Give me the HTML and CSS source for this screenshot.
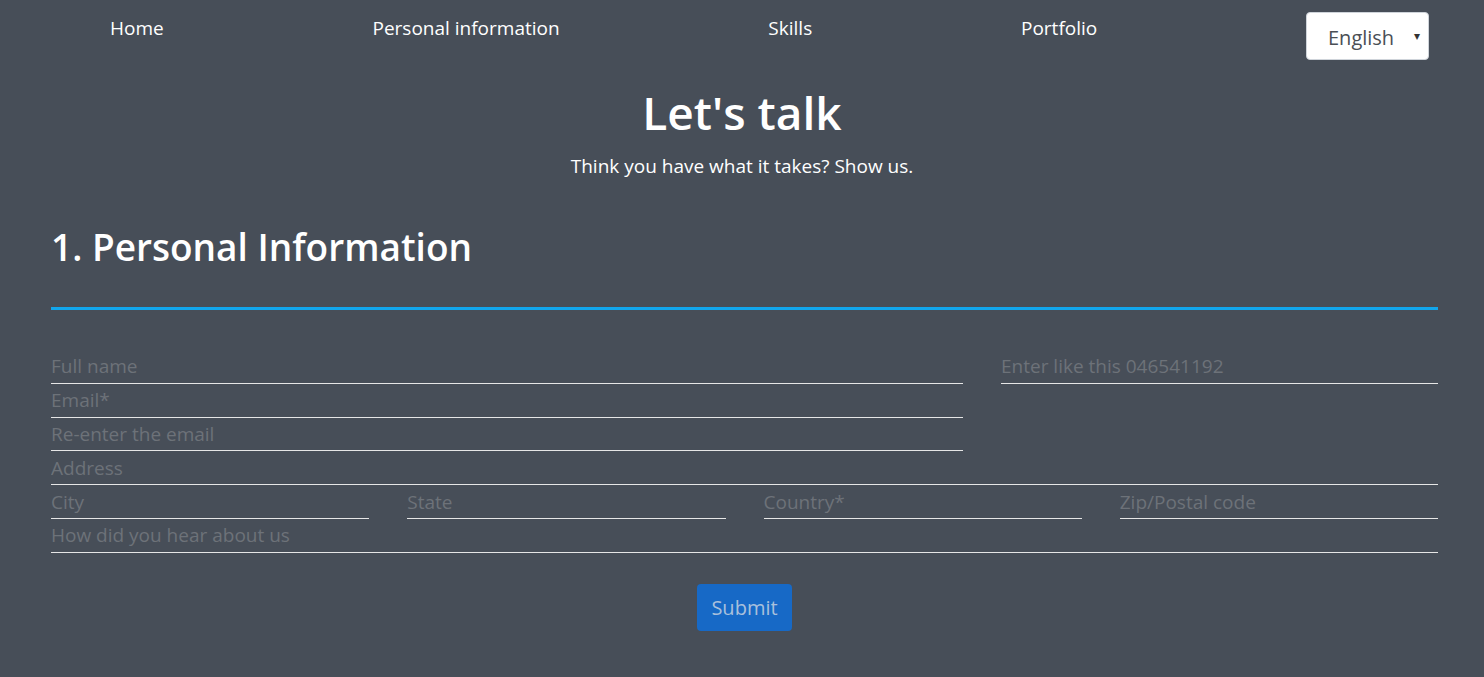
FILE: index.html
```html
<!DOCTYPE html>
<html lang="en">
<head>
<meta charset="utf-8">
<title>Let's talk</title>
<link rel="stylesheet" href="styles.css">
</head>
<body>
<nav class="topnav">
  <a class="nav-link" href="#">Home</a>
  <a class="nav-link" href="#">Personal information</a>
  <a class="nav-link" href="#">Skills</a>
  <a class="nav-link" href="#">Portfolio</a>
  <div class="lang">
    <span class="lang-text">English</span>
    <span class="lang-arrow">&#9662;</span>
  </div>
</nav>
<header class="intro">
  <h1 class="title">Let's talk</h1>
  <p class="subtitle">Think you have what it takes? Show us.</p>
</header>
<main class="container">
  <h2 class="section-title">1. Personal Information</h2>
  <div class="rule"></div>
  <form class="form">
    <input class="field span8" placeholder="Full name">
    <input class="field span4" placeholder="Enter like this 046541192">
    <input class="field span8" placeholder="Email*">
    <input class="field span8 row-start" placeholder="Re-enter the email">
    <input class="field span12" placeholder="Address">
    <input class="field span3" placeholder="City">
    <input class="field span3" placeholder="State">
    <input class="field span3" placeholder="Country*">
    <input class="field span3" placeholder="Zip/Postal code">
    <input class="field span12" placeholder="How did you hear about us">
    <div class="actions span12">
      <button class="submit" type="button">Submit</button>
    </div>
  </form>
</main>
</body>
</html>
```
FILE: styles.css
```css
html, body {
  margin: 0;
  padding: 0;
}
body {
  background: #474e58;
  color: #ffffff;
  font-family: "Open Sans", "Noto Sans", sans-serif;
  min-height: 677px;
}
.topnav {
  display: flex;
  align-items: flex-start;
  justify-content: space-between;
  padding: 12px 55px 0 110px;
  height: 48px;
}
.nav-link {
  color: #ffffff;
  text-decoration: none;
  font-size: 19px;
  line-height: 32px;
}
.lang {
  width: 123px;
  height: 48px;
  box-sizing: border-box;
  background: #ffffff;
  border: 1px solid #cfd4da;
  border-radius: 4px;
  display: flex;
  align-items: center;
  padding: 2px 0 0 21px;
  position: relative;
}
.lang-text {
  color: #4a4f55;
  font-size: 20px;
}
.lang-arrow {
  position: absolute;
  right: 8px;
  top: 14px;
  font-size: 12px;
  color: #333;
}
.intro {
  text-align: center;
  margin-top: 21px;
}
.title {
  margin: 0;
  font-size: 46px;
  font-weight: 600;
  line-height: 62px;
}
.subtitle {
  margin: 9px 0 0;
  font-size: 19px;
  line-height: 28px;
}
.container {
  padding: 0 46px 0 51px;
}
.section-title {
  margin: 43px 0 0;
  font-size: 37px;
  font-weight: 600;
  line-height: 48px;
}
.rule {
  margin-top: 36px;
  height: 3px;
  background: #12a6ec;
}
.form {
  margin-top: 40px;
  display: grid;
  grid-template-columns: repeat(12, 1fr);
  column-gap: 38px;
}
.field {
  height: 33.8px;
  box-sizing: border-box;
  background: transparent;
  border: 0;
  border-bottom: 1px solid #e6e6e6;
  color: #ffffff;
  font-family: inherit;
  font-size: 19px;
  padding: 0;
  outline: none;
}
.field::placeholder {
  color: #6d7279;
}
.span3 { grid-column: span 3; }
.span4 { grid-column: span 4; }
.span8 { grid-column: span 8; }
.span12 { grid-column: 1 / -1; }
.row-start { grid-column: 1 / span 8; }
.actions {
  display: flex;
  justify-content: center;
  padding-top: 31px;
}
.submit {
  width: 95px;
  height: 47px;
  background: #1769c6;
  border: 0;
  border-radius: 4px;
  color: #a9c0dc;
  font-family: inherit;
  font-size: 20px;
  padding: 0;
}
```
